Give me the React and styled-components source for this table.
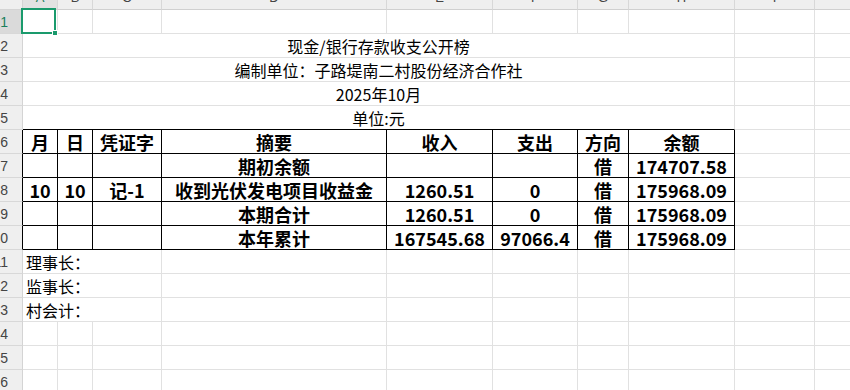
import React from 'react';
import styled, { createGlobalStyle } from 'styled-components';

const GRID = '#e1e1e1';
const HEAD = '#efefef';
const PICK = '#1a9a6c';

const COLS = ['A', 'B', 'C', 'D', 'E', 'F', 'G', 'H', 'I', 'J'];

const ledger = [
    { s: '期初余额', dir: '借', bal: '174707.58' },
    { m: '10', d: '10', v: '记-1', s: '收到光伏发电项目收益金', inc: '1260.51', out: '0', dir: '借', bal: '175968.09' },
    { s: '本期合计', inc: '1260.51', out: '0', dir: '借', bal: '175968.09' },
    { s: '本年累计', inc: '167545.68', out: '97066.4', dir: '借', bal: '175968.09' },
];

const GlobalStyle = createGlobalStyle`
    body {
        margin: 0;
        background: #fff;
        overflow: hidden;
        font-family: "Noto Sans CJK SC", sans-serif;
    }
`;

// column J runs past the right edge of the window
const Sheet = styled.div`
    display: grid;
    grid-template-columns: 23px 35px 35px 69px 225px 106px 85px 51px 106px 80px 110px;
    grid-template-rows: 10px;
    grid-auto-rows: 24px;
    width: 850px;
    height: 390px;
    overflow: hidden;
    color: #000;
`;

const Corner = styled.div`
    background: ${HEAD};
    border-right: 1px solid #d4d4d4;
    border-bottom: 1px solid #d4d4d4;
`;

// only the lower edge of the column letters shows, the sheet is scrolled
const ColHead = styled.div`
    background: ${props => (props.$active ? '#e2e2e2' : HEAD)};
    border-right: 1px solid #d8d8d8;
    border-bottom: 1px solid #d0d0d0;
    display: flex;
    justify-content: center;
    align-items: flex-start;
    overflow: hidden;
    font-family: "Liberation Sans", sans-serif;
    font-size: 13px;
    line-height: 14px;
    color: ${props => (props.$active ? '#1b7f5c' : '#444')};

    span {
        margin-top: -9px;
    }
`;

const RowHead = styled.div`
    background: ${props => (props.$active ? '#dadada' : HEAD)};
    border-right: 1px solid ${props => (props.$edge ? '#000' : '#d4d4d4')};
    border-bottom: 1px solid #d8d8d8;
    display: flex;
    justify-content: flex-end;
    align-items: center;
    padding-right: 14px;
    overflow: hidden;
    white-space: nowrap;
    font-family: "Liberation Sans", sans-serif;
    font-size: 14px;
    color: ${props => (props.$active ? '#1b7f5c' : '#444')};
`;

const Cell = styled.div`
    grid-column: span ${props => props.$span || 1};
    position: relative;
    border-right: 1px solid ${props => (props.$edge ? '#000' : GRID)};
    border-bottom: 1px solid ${props => (props.$under ? '#000' : GRID)};
    display: flex;
    align-items: center;
    justify-content: ${props => (props.$left ? 'flex-start' : 'center')};
    padding-left: ${props => (props.$left ? '3px' : '0')};
    white-space: nowrap;
    font-size: 16px;
    line-height: 1;
`;

const TableCell = styled(Cell)`
    border-right-color: #000;
    border-bottom-color: #000;
    font-size: 18px;
    font-weight: 700;
`;

const Selection = styled.div`
    position: absolute;
    left: -2px;
    top: -2px;
    width: 35px;
    height: 26px;
    box-sizing: border-box;
    border: 2px solid ${PICK};

    &::after {
        content: '';
        position: absolute;
        right: -4px;
        bottom: -4px;
        width: 6px;
        height: 6px;
        background: ${PICK};
        border: 1px solid #fff;
        box-sizing: border-box;
    }
`;

const blanks = n => Array.from({ length: n }, (_, i) => <Cell key={`b${i}`} />);

const TitleRow = ({ n, children, under }) => (
    <>
        <RowHead>{n}</RowHead>
        <Cell $span={8} $under={under}>{children}</Cell>
        {blanks(2)}
    </>
);

const LedgerRow = ({ n, cells }) => (
    <>
        <RowHead $edge>{n}</RowHead>
        {cells.map((c, i) => (
            <TableCell key={i}>{c}</TableCell>
        ))}
        {blanks(2)}
    </>
);

const SignRow = ({ n, label }) => (
    <>
        <RowHead>{n}</RowHead>
        <Cell $span={3} $left>{label}</Cell>
        {blanks(7)}
    </>
);

const App = () => {
    return (
        <>
            <GlobalStyle />
            <Sheet>
                <Corner />
                {COLS.map((c, i) => (
                    <ColHead key={c} $active={i === 0}>
                        <span>{c}</span>
                    </ColHead>
                ))}

                <RowHead $active>1</RowHead>
                <Cell>
                    <Selection />
                </Cell>
                {blanks(9)}

                <TitleRow n={2}>现金/银行存款收支公开榜</TitleRow>
                <TitleRow n={3}>编制单位：子路堤南二村股份经济合作社</TitleRow>
                <TitleRow n={4}>2025年10月</TitleRow>
                <TitleRow n={5} under>单位:元</TitleRow>

                <LedgerRow n={6} cells={['月', '日', '凭证字', '摘要', '收入', '支出', '方向', '余额']} />
                {ledger.map((r, i) => (
                    <LedgerRow
                        key={i}
                        n={7 + i}
                        cells={[r.m, r.d, r.v, r.s, r.inc, r.out, r.dir, r.bal]}
                    />
                ))}

                <SignRow n={11} label="理事长：" />
                <SignRow n={12} label="监事长：" />
                <SignRow n={13} label="村会计：" />

                {[14, 15, 16].map(n => (
                    <React.Fragment key={n}>
                        <RowHead>{n}</RowHead>
                        {blanks(10)}
                    </React.Fragment>
                ))}
            </Sheet>
        </>
    );
};

export default App;
